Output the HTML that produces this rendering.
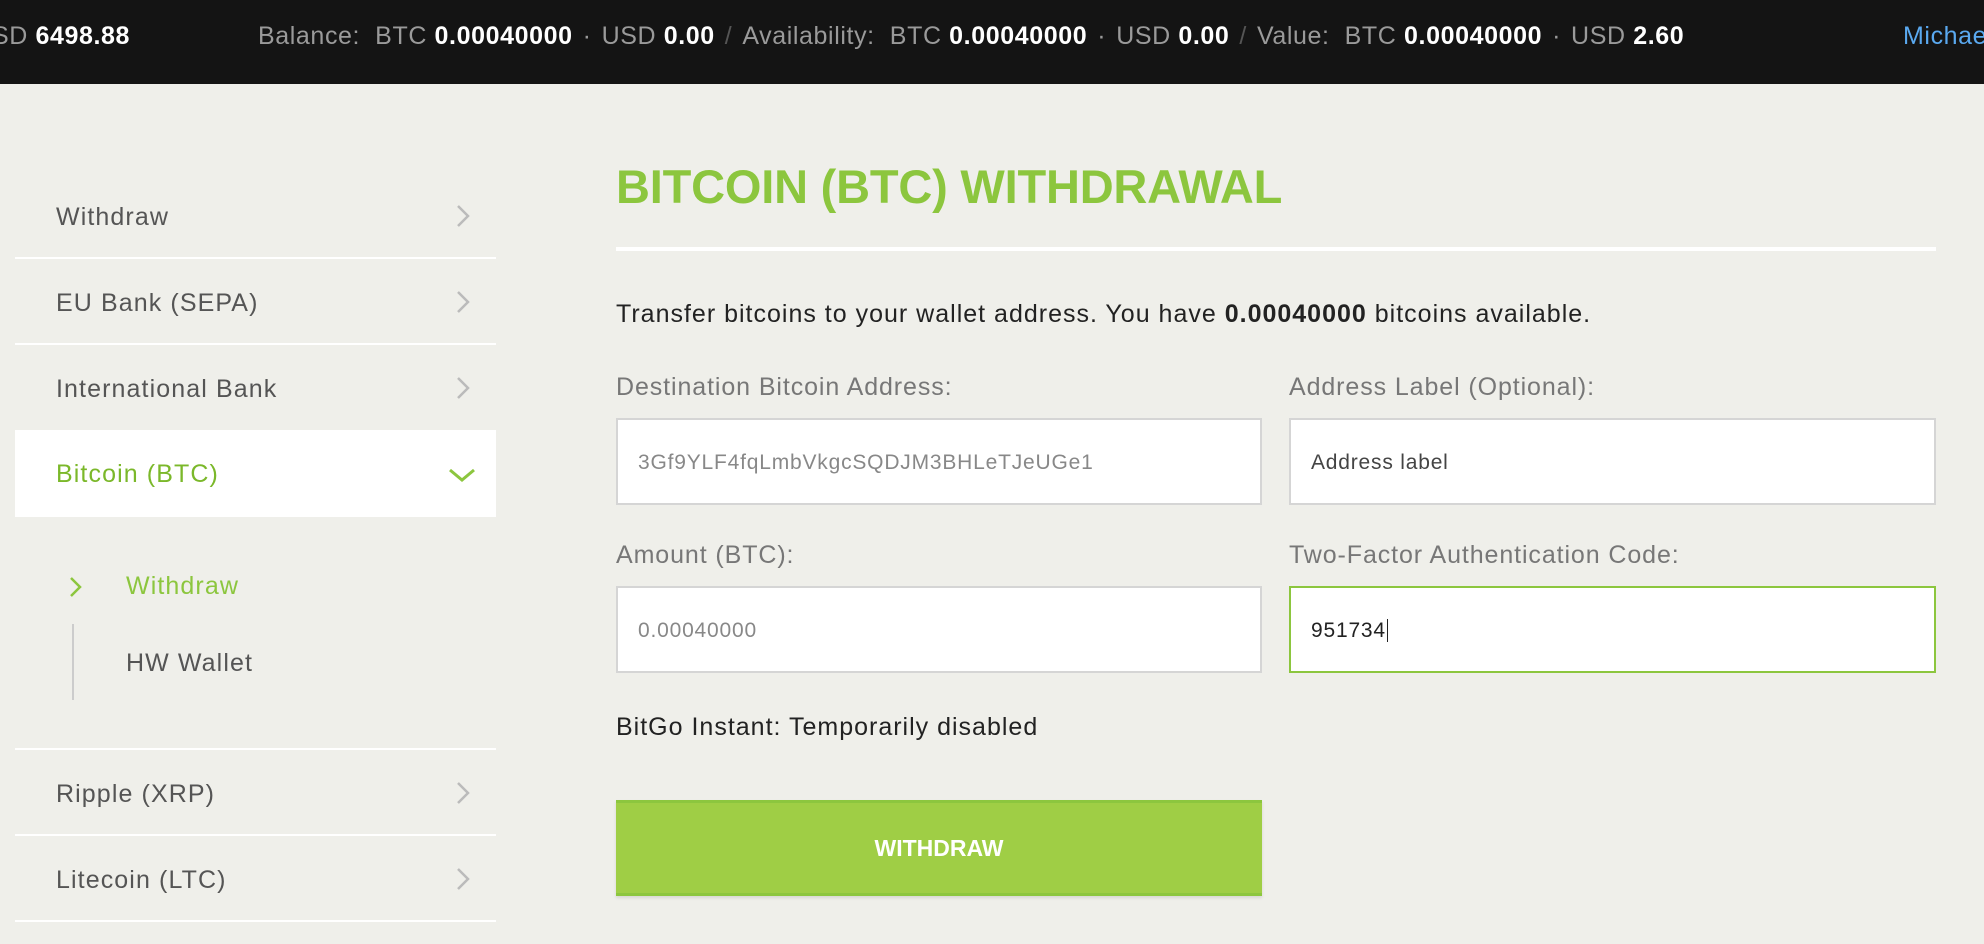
<!DOCTYPE html>
<html><head><meta charset="utf-8"><style>
*{margin:0;padding:0;box-sizing:border-box}
body{width:1984px;height:944px;overflow:hidden;background:#efefea;font-family:"Liberation Sans",sans-serif;position:relative}
.top{position:absolute;left:0;top:0;width:1984px;height:84px;background:#141414;color:#9a9a9a;font-size:25px;letter-spacing:0.6px}
.top span{position:absolute;top:22px;white-space:nowrap}
.top b{color:#fff}
.top .d{color:#9a9a9a;margin:0 10px}
.top .s{color:#555;margin:0 10px}
.row{position:absolute;left:15px;width:481px;height:86px;border-bottom:2px solid #fff;font-size:25px;letter-spacing:1.1px;color:#555;line-height:88px;padding-left:41px}
.chev{position:absolute;right:24px;top:30px;width:18px;height:26px}
.title{position:absolute;left:616px;top:159px;font-size:47px;font-weight:bold;color:#8cc63e;letter-spacing:-0.2px}
.hr{position:absolute;left:616px;top:247px;width:1320px;height:4px;background:#fff}
.p{position:absolute;left:616px;top:300px;font-size:25px;letter-spacing:1px;color:#222}
.lbl{position:absolute;font-size:25px;letter-spacing:0.9px;color:#777}
.inp{position:absolute;height:87px;background:#fff;border:2px solid #d5d5d5;font-size:21px;letter-spacing:0.8px;line-height:86px;padding-left:20px;color:#888}
</style></head><body>
<div class="top">
<span style="left:-8px">SD <b>6498.88</b></span>
<span style="left:258px">Balance:&nbsp; BTC <b>0.00040000</b><span class="d" style="position:static">·</span>USD <b>0.00</b><span class="s" style="position:static">/</span>Availability:&nbsp; BTC <b>0.00040000</b><span class="d" style="position:static">·</span>USD <b>0.00</b><span class="s" style="position:static">/</span>Value:&nbsp; BTC <b>0.00040000</b><span class="d" style="position:static">·</span>USD <b>2.60</b></span>
<span style="left:1903px;color:#5aa9f0">Michael</span>
</div>

<div class="row" style="top:173px">Withdraw<svg class="chev" viewBox="0 0 18 26"><path d="M4 3l10 10-10 10" fill="none" stroke="#bbb" stroke-width="2.5"/></svg></div>
<div class="row" style="top:259px">EU Bank (SEPA)<svg class="chev" viewBox="0 0 18 26"><path d="M4 3l10 10-10 10" fill="none" stroke="#bbb" stroke-width="2.5"/></svg></div>
<div class="row" style="top:345px;border-bottom:none">International Bank<svg class="chev" viewBox="0 0 18 26"><path d="M4 3l10 10-10 10" fill="none" stroke="#bbb" stroke-width="2.5"/></svg></div>
<div class="row" style="top:430px;height:87px;background:#fff;color:#7bb82a;border-bottom:none">Bitcoin (BTC)<svg class="chev" style="right:20px;width:28px;top:36px;height:18px" viewBox="0 0 28 18"><path d="M2 4l12 10 12-10" fill="none" stroke="#8cc63e" stroke-width="3"/></svg></div>
<svg style="position:absolute;left:68px;top:576px" width="16" height="22" viewBox="0 0 16 22"><path d="M3 2l9 9-9 9" fill="none" stroke="#8cc63e" stroke-width="2.5"/></svg>
<div style="position:absolute;left:126px;top:572px;font-size:25px;letter-spacing:1.1px;color:#8cc63e">Withdraw</div>
<div style="position:absolute;left:72px;top:624px;width:2px;height:76px;background:#ccc"></div>
<div style="position:absolute;left:126px;top:649px;font-size:25px;letter-spacing:1.1px;color:#555">HW Wallet</div>
<div class="row" style="top:664px;border-bottom:2px solid #fff;height:86px;line-height:1"></div>
<div class="row" style="top:750px">Ripple (XRP)<svg class="chev" viewBox="0 0 18 26"><path d="M4 3l10 10-10 10" fill="none" stroke="#bbb" stroke-width="2.5"/></svg></div>
<div class="row" style="top:836px">Litecoin (LTC)<svg class="chev" viewBox="0 0 18 26"><path d="M4 3l10 10-10 10" fill="none" stroke="#bbb" stroke-width="2.5"/></svg></div>

<div class="title">BITCOIN (BTC) WITHDRAWAL</div>
<div class="hr"></div>
<div class="p">Transfer bitcoins to your wallet address. You have <b>0.00040000</b> bitcoins available.</div>
<div class="lbl" style="left:616px;top:373px">Destination Bitcoin Address:</div>
<div class="lbl" style="left:1289px;top:373px">Address Label (Optional):</div>
<div class="inp" style="left:616px;top:418px;width:646px">3Gf9YLF4fqLmbVkgcSQDJM3BHLeTJeUGe1</div>
<div class="inp" style="left:1289px;top:418px;width:647px;color:#444">Address label</div>
<div class="lbl" style="left:616px;top:541px">Amount (BTC):</div>
<div class="lbl" style="left:1289px;top:541px">Two-Factor Authentication Code:</div>
<div class="inp" style="left:616px;top:586px;width:646px">0.00040000</div>
<div class="inp" style="left:1289px;top:586px;width:647px;border-color:#8cc63e;color:#222">951734<span style="border-left:1px solid #222;margin-left:1px"></span></div>
<div style="position:absolute;left:616px;top:713px;font-size:25px;letter-spacing:1px;color:#222">BitGo Instant: Temporarily disabled</div>
<div style="position:absolute;left:616px;top:800px;width:646px;height:96px;background:#9fce45;border-top:3px solid #8cc63e;border-bottom:3px solid #8cc63e;color:#fff;font-weight:bold;font-size:23px;text-align:center;line-height:90px;box-shadow:0 2px 3px rgba(0,0,0,.1)">WITHDRAW</div>
</body></html>
